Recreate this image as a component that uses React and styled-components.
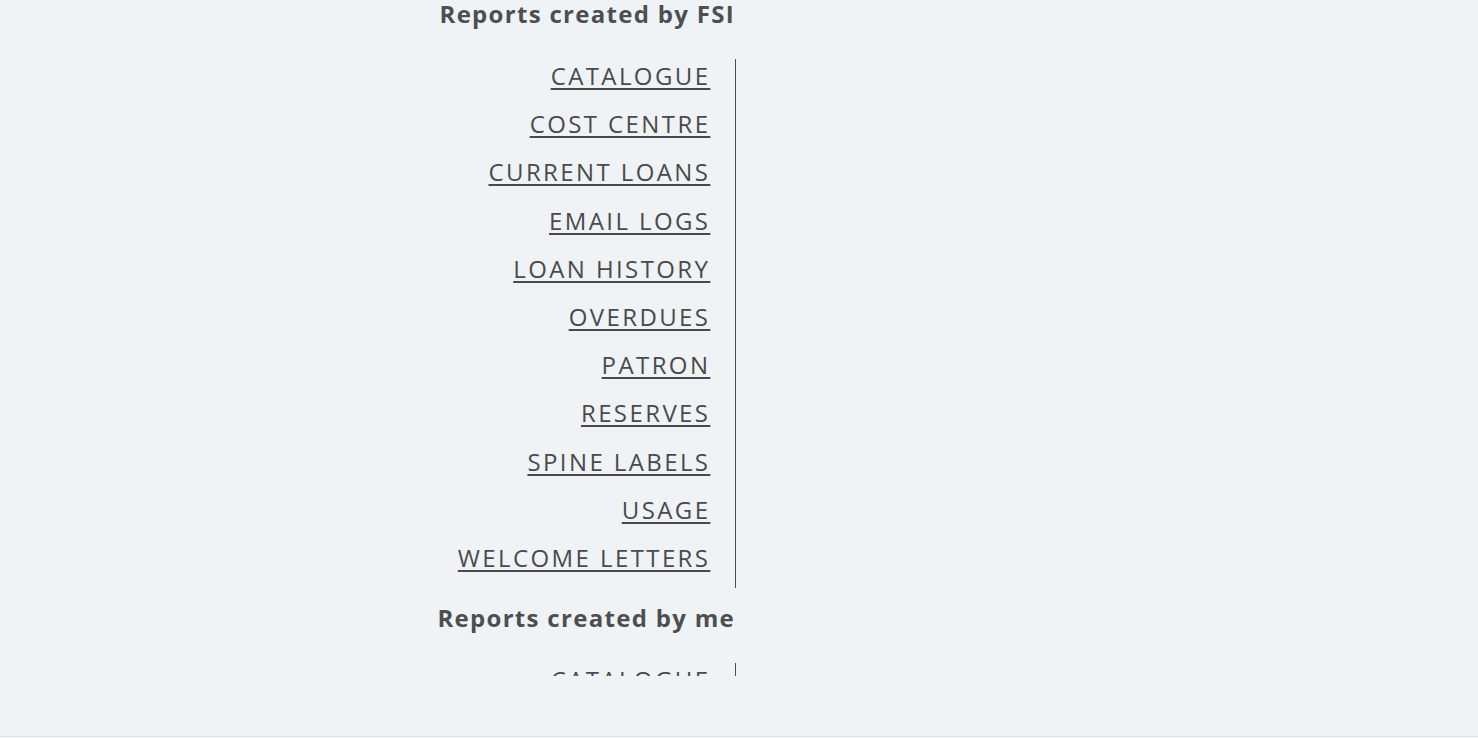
import React from "react";
import styled, { createGlobalStyle } from "styled-components";

const GlobalStyle = createGlobalStyle`
  html, body { margin: 0; padding: 0; background: #eff3f6; }
  body { font-family: "Open Sans", "Liberation Sans", sans-serif; }
  * { box-sizing: border-box; }
`;

const Page = styled.div`
  height: 738px;
  display: flex;
  flex-direction: column;
  background: #eff3f6;
`;

const Viewport = styled.div`
  height: 676px;
  overflow: hidden;
  display: grid;
  grid-template-columns: 736px 1fr;
  align-items: start;
`;

const Spacer = styled.div`
  flex: 1;
`;

const Footer = styled.div`
  height: 2px;
  border-top: 1px solid #dde1e5;
  background: #f6f7f8;
`;

const Column = styled.div`
  display: flex;
  flex-direction: column;
  text-align: right;
`;

const Section = styled.section`
  margin-bottom: 16px;
`;

const Heading = styled.h2`
  margin: 0 0 29px;
  padding-right: 1px;
  height: 30px;
  font-family: "Open Sans", "Liberation Sans", sans-serif;
  font-size: 24px;
  font-weight: 700;
  line-height: 28px;
  letter-spacing: 1.3px;
  color: #4e4e4e;
`;

const List = styled.ul`
  list-style: none;
  margin: 0;
  padding: 0 27px 13px 0;
  display: flex;
  flex-direction: column;
  gap: 14.2px;
  border-right: 1px solid #4e4e4e;
`;

const Item = styled.li`
  display: block;
  height: 34px;
  font-size: 24px;
  line-height: 34px;
`;

const ReportLink = styled.a`
  font-family: "Open Sans", "Liberation Sans", sans-serif;
  font-size: 24px;
  line-height: 34px;
  font-weight: 400;
  letter-spacing: 2.4px;
  margin-right: -2.4px;
  color: #4a4a4a;
  text-decoration: underline;
  text-decoration-thickness: 2px;
  text-underline-offset: 3px;
  cursor: pointer;
`;

const reports = [
  "CATALOGUE",
  "COST CENTRE",
  "CURRENT LOANS",
  "EMAIL LOGS",
  "LOAN HISTORY",
  "OVERDUES",
  "PATRON",
  "RESERVES",
  "SPINE LABELS",
  "USAGE",
  "WELCOME LETTERS",
];

const sections = [
  { title: "Reports created by FSI", items: reports },
  { title: "Reports created by me", items: ["CATALOGUE"] },
];

export default function App() {
  return (
    <>
      <GlobalStyle />
      <Page>
        <Viewport>
          <Column>
            {sections.map((s) => (
              <Section key={s.title}>
                <Heading>{s.title}</Heading>
                <List>
                  {s.items.map((r) => (
                    <Item key={r}>
                      <ReportLink href="#">{r}</ReportLink>
                    </Item>
                  ))}
                </List>
              </Section>
            ))}
          </Column>
          <div />
        </Viewport>
        <Spacer />
        <Footer />
      </Page>
    </>
  );
}
